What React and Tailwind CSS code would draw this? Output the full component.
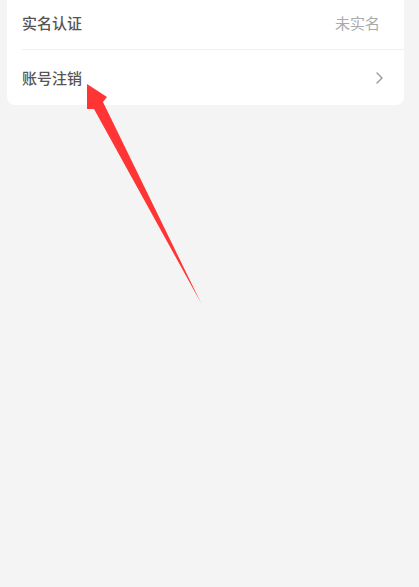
export default function App() {
  return (
    <div className="relative h-[587px] w-[419px] overflow-hidden bg-[#f4f4f4]" style={{ fontFamily: '"Noto Sans CJK SC", "Noto Sans", sans-serif' }}>
      <div className="ml-[7px] mr-[15px] rounded-b-[8px] bg-white">
        <div className="ml-[15px] flex h-[50px] items-center justify-between border-b border-[#f0f0f0] pb-[5px] pr-[24px]">
          <span className="text-[15px] font-medium leading-none text-[#555555]">实名认证</span>
          <span className="text-[15px] leading-none text-[#aaaaaa]">未实名</span>
        </div>
        <div className="ml-[15px] flex h-[55px] items-center justify-between pr-[21px]">
          <span className="text-[15px] font-medium leading-none text-[#555555]">账号注销</span>
          <svg width="8" height="12" viewBox="0 0 8 12" fill="none">
            <path d="M2 1 L7 6 L2 11" stroke="#999999" strokeWidth="1.4" strokeLinecap="round" strokeLinejoin="round" />
          </svg>
        </div>
      </div>
      <svg className="absolute left-0 top-0" width="419" height="587" viewBox="0 0 419 587">
        <polygon points="87,84 107,97 103,102 201,303 94,109 87,109" fill="#ff3535" />
      </svg>
    </div>
  );
}
